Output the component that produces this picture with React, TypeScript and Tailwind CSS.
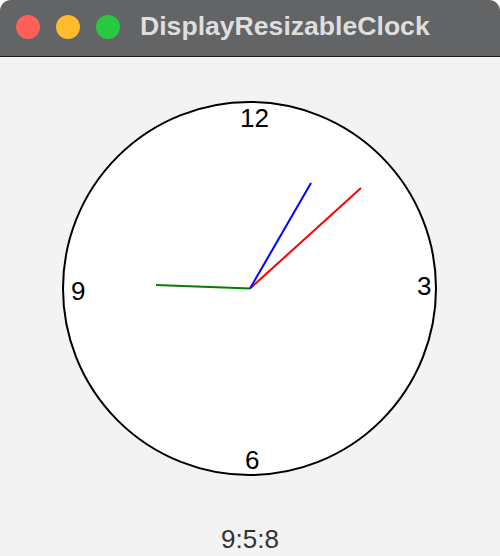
import React from "react";

export default function App() {
  return (
    <div className="w-[500px] h-[556px] bg-white overflow-hidden">
      <div className="w-[500px] h-[556px] rounded-t-[11px] overflow-hidden flex flex-col bg-[#f3f3f3]">
        <div className="h-[57px] shrink-0 bg-[#636466] border-b border-[#1c1c1c] flex items-center">
          <div className="flex items-center gap-[16px] pl-[16px] pb-[2px]">
            <span className="w-[24px] h-[24px] rounded-full bg-[#fe5f57]" />
            <span className="w-[24px] h-[24px] rounded-full bg-[#febc2e]" />
            <span className="w-[24px] h-[24px] rounded-full bg-[#28c840]" />
          </div>
          <span
            className="ml-[20px] pb-[4px] text-[26.6px] font-bold text-[#dedede] leading-none"
            style={{ fontFamily: '"Liberation Sans", Arial, sans-serif' }}
          >
            DisplayResizableClock
          </span>
        </div>
        <svg width="500" height="468" className="block shrink-0" style={{ fontFamily: '"Liberation Sans", Arial, sans-serif' }}>
          <circle cx="249.5" cy="231.5" r="186.5" fill="#ffffff" stroke="#000000" strokeWidth="2" />
          <text x="240" y="70" fontSize="26" fill="#000">12</text>
          <text x="71" y="243" fontSize="26" fill="#000">9</text>
          <text x="417" y="238" fontSize="26" fill="#000">3</text>
          <text x="245" y="412" fontSize="26" fill="#000">6</text>
          <line x1="250" y1="231.5" x2="361" y2="131" stroke="#ff0000" strokeWidth="2" />
          <line x1="250" y1="231.5" x2="311" y2="126" stroke="#0000ff" strokeWidth="2" />
          <line x1="250" y1="231.5" x2="156" y2="228" stroke="#008000" strokeWidth="2" />
        </svg>
        <div
          className="text-center text-[26px] leading-[28px] text-[#333333]"
          style={{ fontFamily: '"Liberation Sans", Arial, sans-serif' }}
        >
          9:5:8
        </div>
      </div>
    </div>
  );
}
